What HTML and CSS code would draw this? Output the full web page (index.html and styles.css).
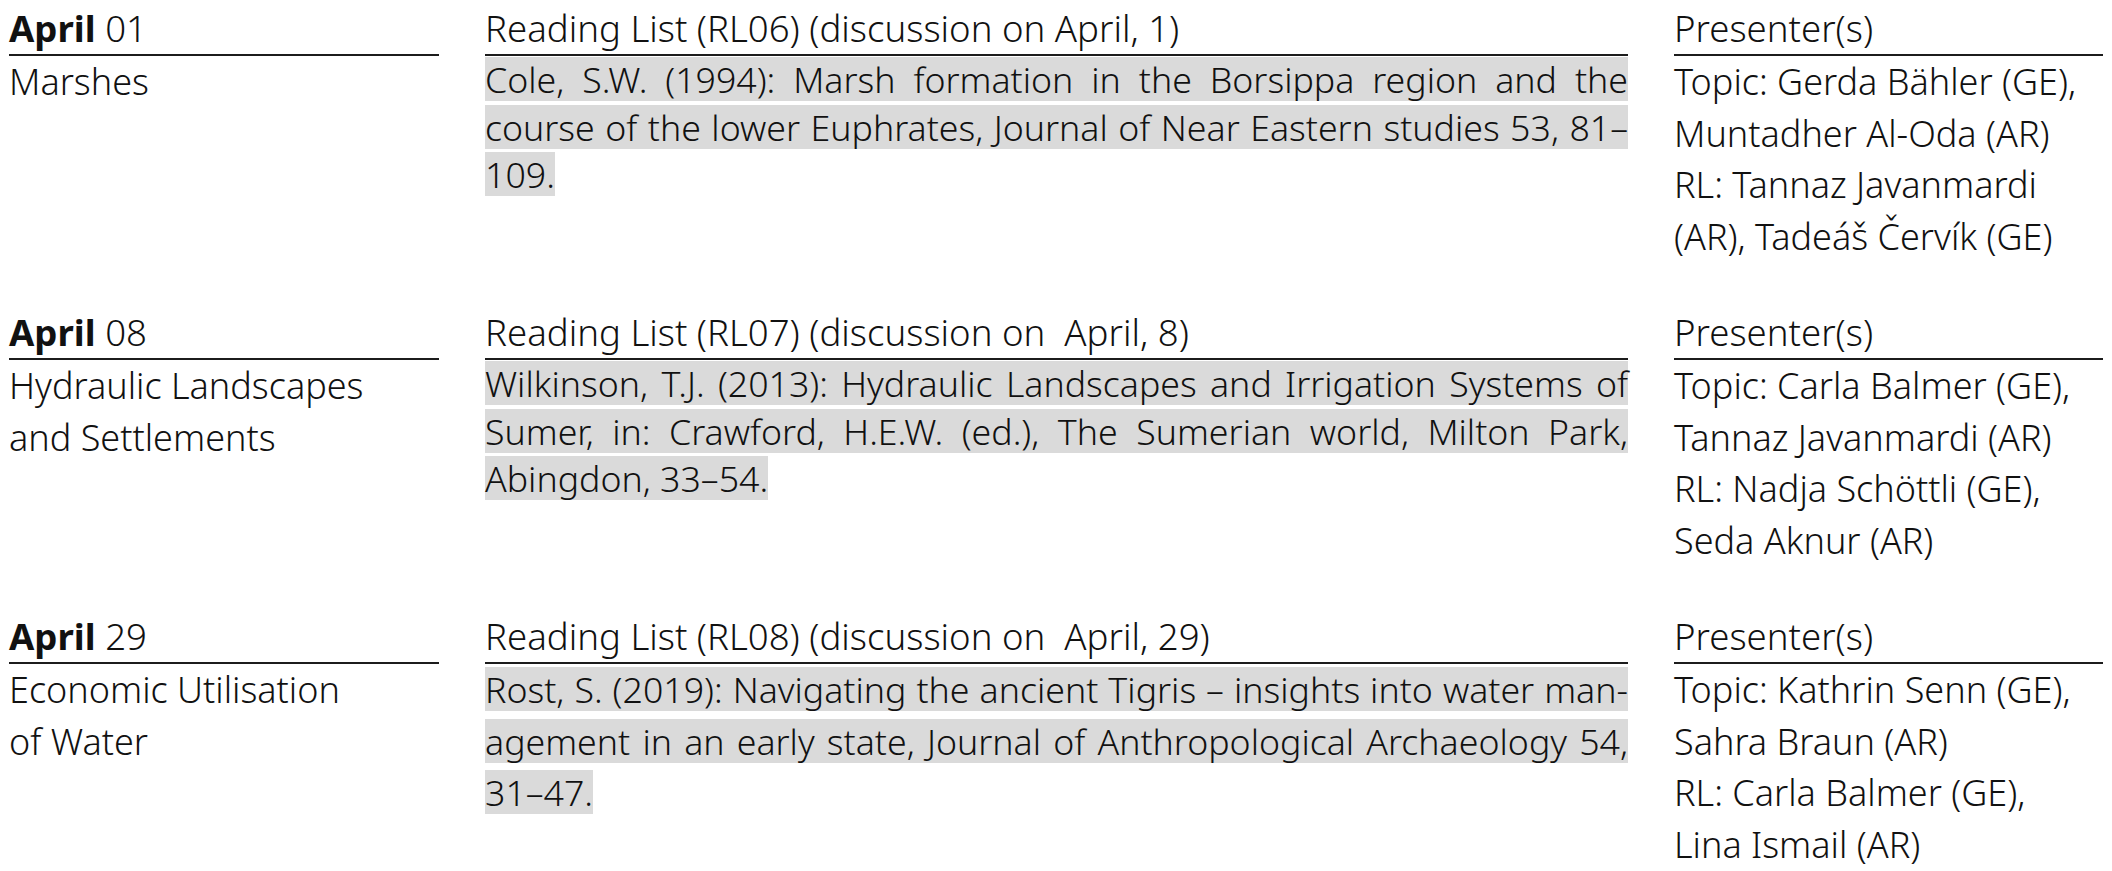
FILE: index.html
```html
<!DOCTYPE html>
<html lang="en">
<head>
<meta charset="utf-8">
<title>Seminar schedule</title>
<link rel="stylesheet" href="styles.css">
</head>
<body>
<main class="schedule">
  <section class="session">
    <div class="col">
      <h2 class="col-head"><b>April</b> 01</h2>
      <p class="col-body">Marshes</p>
    </div>
    <div class="col">
      <h2 class="col-head">Reading List (RL06) (discussion on April, 1)</h2>
      <p class="biblio"><span class="mark">Cole, S.W. (1994): Marsh formation in the Borsippa region and the course of the lower Euphrates, Journal of Near Eastern studies 53, 81–109.</span></p>
    </div>
    <div class="col">
      <h2 class="col-head">Presenter(s)</h2>
      <p class="col-body">Topic: Gerda Bähler (GE), Muntadher Al-Oda (AR)</p>
      <p class="col-body">RL: Tannaz Javanmardi (AR), Tadeáš Červík (GE)</p>
    </div>
  </section>

  <section class="session">
    <div class="col">
      <h2 class="col-head"><b>April</b> 08</h2>
      <p class="col-body">Hydraulic Landscapes<br>and Settlements</p>
    </div>
    <div class="col">
      <h2 class="col-head">Reading List (RL07) (discussion on&nbsp; April, 8)</h2>
      <p class="biblio"><span class="mark">Wilkinson, T.J. (2013): Hydraulic Landscapes and Irrigation Systems of Sumer, in: Crawford, H.E.W. (ed.), The Sumerian world, Milton Park, Abingdon, 33–54.</span></p>
    </div>
    <div class="col">
      <h2 class="col-head">Presenter(s)</h2>
      <p class="col-body">Topic: Carla Balmer (GE), Tannaz Javanmardi (AR)</p>
      <p class="col-body">RL: Nadja Schöttli (GE), Seda Aknur (AR)</p>
    </div>
  </section>

  <section class="session">
    <div class="col">
      <h2 class="col-head"><b>April</b> 29</h2>
      <p class="col-body">Economic Utilisation<br>of Water</p>
    </div>
    <div class="col">
      <h2 class="col-head">Reading List (RL08) (discussion on&nbsp; April, 29)</h2>
      <p class="biblio biblio-loose"><span class="mark">Rost, S. (2019): Navigating the ancient Tigris – insights into water man&shy;agement in an early state, Journal of Anthropological Archaeology 54, 31–47.</span></p>
    </div>
    <div class="col">
      <h2 class="col-head">Presenter(s)</h2>
      <p class="col-body">Topic: Kathrin Senn (GE), Sahra Braun (AR)</p>
      <p class="col-body">RL: Carla Balmer (GE),<br>Lina Ismail (AR)</p>
    </div>
  </section>
</main>
</body>
</html>
```

FILE: styles.css
```css
html, body {
  margin: 0;
  padding: 0;
  background: #ffffff;
}

body {
  font-family: "Noto Sans", "Open Sans", "Liberation Sans", sans-serif;
  font-weight: 300;
  color: #111111;
  padding: 3px 9px 0 9px;
}

.schedule {
  display: flex;
  flex-direction: column;
  gap: 45px;
}

.session {
  display: grid;
  grid-template-columns: 430fr 1143fr 429fr;
  column-gap: 46px;
  align-items: start;
}

.col {
  display: flex;
  flex-direction: column;
  min-width: 0;
}

.col-head {
  margin: 0;
  font-size: 36.6px;
  line-height: 51px;
  font-weight: 300;
  border-bottom: 2px solid #1c1c1c;
  white-space: nowrap;
}

.col-head b {
  font-weight: 700;
}

.col-body {
  margin: 0;
  font-size: 36px;
  line-height: 51.5px;
}

.biblio {
  margin: 0;
  font-size: 35.7px;
  line-height: 47.5px;
  text-align: justify;
  hyphens: manual;
}

.biblio-loose {
  line-height: 51.5px;
}

.mark {
  background-image: linear-gradient(#dadada, #dadada);
  background-size: 100% 44px;
  background-position: 0 2px;
  background-repeat: no-repeat;
  -webkit-box-decoration-break: clone;
  box-decoration-break: clone;
}
```
